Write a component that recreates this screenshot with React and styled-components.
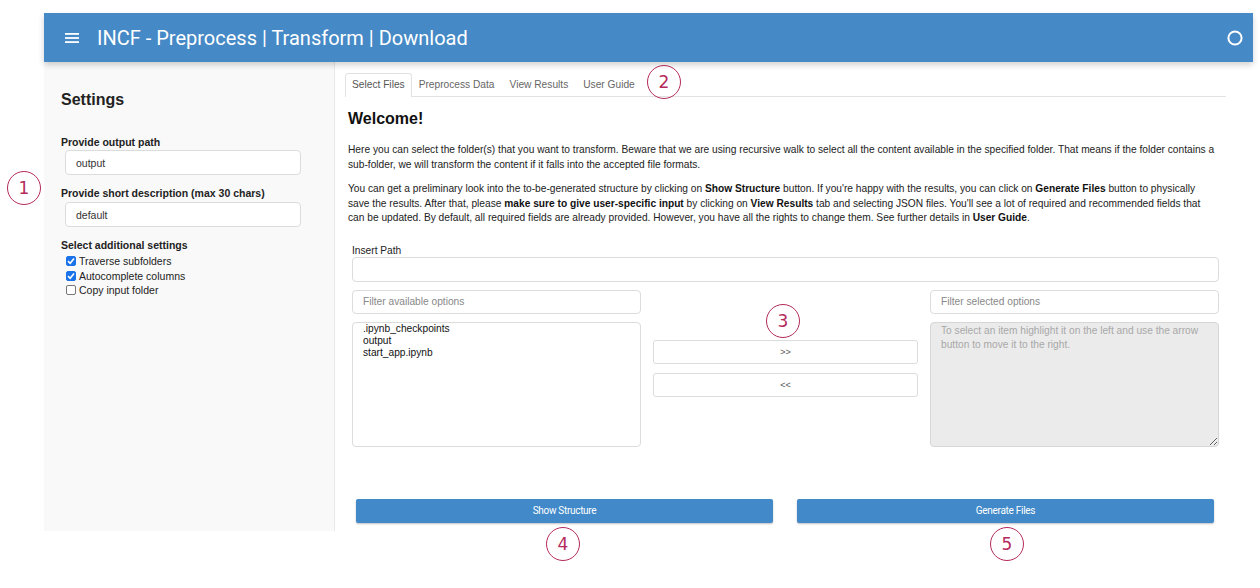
import styled, { createGlobalStyle } from "styled-components";

const Global = createGlobalStyle`
  html, body {
    margin: 0;
    padding: 0;
    background: #ffffff;
  }
  body {
    font-family: "Liberation Sans", Arial, sans-serif;
    color: #222;
  }
`;

const Page = styled.div`
  position: relative;
  width: 1260px;
  height: 588px;
  padding: 13px 7px 0 44px;
  box-sizing: border-box;
`;

const Frame = styled.div`
  display: flex;
  flex-direction: column;
  width: 1209px;
`;

const Header = styled.div`
  display: flex;
  align-items: center;
  height: 49px;
  background: #4589c6;
  color: #fff;
  padding: 0 9px 0 21px;
  box-shadow: 0 3px 6px rgba(0, 0, 0, 0.18);
  position: relative;
  z-index: 2;
`;

const Title = styled.div`
  font-family: Roboto, "Liberation Sans", sans-serif;
  font-size: 20px;
  margin-left: 18px;
  flex: 1;
`;

const Body = styled.div`
  display: grid;
  grid-template-columns: 291px 1fr;
  grid-template-rows: 469px;
  height: 469px;
  overflow: hidden;
`;

const Sidebar = styled.div`
  background: #f9f9f9;
  border-right: 1px solid #e8e8e8;
  padding: 28px 0 0 17px;
`;

const SideTitle = styled.h2`
  margin: 0 0 25px;
  font-size: 16px;
  line-height: 20px;
  font-weight: 700;
  color: #222;
`;

const FieldLabel = styled.div`
  font-size: 10.5px;
  font-weight: 700;
  line-height: 14px;
  color: #222;
  margin-bottom: ${(p) => p.$mb || 2}px;
`;

const SideInput = styled.div`
  width: 236px;
  height: 25px;
  box-sizing: border-box;
  margin: 0 0 11px 4px;
  border: 1px solid #dcdcdc;
  border-radius: 4px;
  background: #fff;
  display: flex;
  align-items: center;
  padding-left: 10px;
  font-size: 10.5px;
  color: #333;
`;

const CheckRow = styled.label`
  display: flex;
  align-items: center;
  gap: 3px;
  margin-left: 5px;
  height: 14.5px;
  font-size: 10.5px;
  color: #222;
`;

const Box = styled.span`
  width: 10px;
  height: 10px;
  border-radius: 2px;
  box-sizing: border-box;
  border: 1px solid ${(p) => (p.$on ? "#1a73e8" : "#777")};
  background: ${(p) => (p.$on ? "#1a73e8" : "#fff")};
  display: flex;
  align-items: center;
  justify-content: center;
`;

const Main = styled.div`
  padding: 11px 27px 0 10px;
  background: #fff;
`;

const Tabs = styled.div`
  display: flex;
  height: 23px;
  border-bottom: 1px solid #e2e2e2;
`;

const Tab = styled.div`
  font-size: 10.2px;
  color: ${(p) => (p.$active ? "#555" : "#666")};
  padding: 0 6px 2px;
  margin-right: ${(p) => (p.$active ? 0 : 1)}px;
  display: flex;
  align-items: center;
  box-sizing: border-box;
  height: 24px;
  background: ${(p) => (p.$active ? "#fff" : "transparent")};
  border: 1px solid ${(p) => (p.$active ? "#e2e2e2" : "transparent")};
  border-bottom: none;
  border-radius: 3px 3px 0 0;
`;

const Welcome = styled.h3`
  margin: 12px 0 0 3px;
  font-size: 16px;
  line-height: 20px;
  font-weight: 700;
  color: #111;
`;

const Para = styled.p`
  margin: ${(p) => p.$mt || 0}px 9px 0 3px;
  font-size: 10.2px;
  line-height: 14.5px;
  color: #222;
  b {
    color: #111;
  }
`;

const Widget = styled.div`
  margin: 18px 0 0 7px;
  width: 867px;
`;

const SmallLabel = styled.div`
  font-size: 10.2px;
  line-height: 13px;
  color: #222;
`;

const TextBox = styled.div`
  height: ${(p) => (p.$ph ? 24 : 25)}px;
  box-sizing: border-box;
  border: 1px solid #dcdcdc;
  border-radius: 4px;
  background: #fff;
  display: flex;
  align-items: center;
  padding-left: 10px;
  font-size: 10.2px;
  color: ${(p) => (p.$ph ? "#888" : "#333")};
`;

const Transfer = styled.div`
  display: grid;
  grid-template-columns: 289px 1fr 289px;
  column-gap: 12px;
  margin-top: 8px;
`;

const Column = styled.div`
  display: flex;
  flex-direction: column;
  gap: 8px;
`;

const ListBox = styled.div`
  height: 125px;
  box-sizing: border-box;
  border: 1px solid #dcdcdc;
  border-radius: 4px;
  background: #fff;
  padding: 0 10px;
  font-size: 10.2px;
  line-height: 12px;
  color: #111;
`;

const Pick = styled.textarea`
  height: 125px;
  box-sizing: border-box;
  border: 1px solid #d6d6d6;
  border-radius: 4px;
  background: #ebebeb;
  padding: 1px 10px;
  font-family: "Liberation Sans", Arial, sans-serif;
  font-size: 10.2px;
  line-height: 14.5px;
  resize: both;
  outline: none;
  &::placeholder {
    color: #a8a8a8;
  }
`;

const Arrows = styled.div`
  display: flex;
  flex-direction: column;
  gap: 9px;
  padding-top: 50px;
`;

const ArrowButton = styled.div`
  height: 24px;
  box-sizing: border-box;
  border: 1px solid #dcdcdc;
  border-radius: 3px;
  background: #fff;
  display: flex;
  align-items: center;
  justify-content: center;
  font-size: 9px;
  color: #555;
`;

const Actions = styled.div`
  display: grid;
  grid-template-columns: 1fr 1fr;
  column-gap: 24px;
  margin: 52px 12px 0 11px;
`;

const Action = styled.div`
  height: 24px;
  background: #4189c8;
  border-radius: 2px;
  box-shadow: 0 1px 2px rgba(0, 0, 0, 0.25);
  display: flex;
  align-items: center;
  justify-content: center;
  color: #fff;
  font-family: Roboto, "Liberation Sans", sans-serif;
  font-size: 10px;
  letter-spacing: -0.3px;
`;

const Mark = styled.div`
  position: absolute;
  left: ${(p) => p.$x - 17}px;
  top: ${(p) => p.$y - 17}px;
  width: 34px;
  height: 34px;
  box-sizing: border-box;
  border: 1.5px solid #b52a5c;
  border-radius: 50%;
  display: flex;
  align-items: center;
  justify-content: center;
  color: #b52a5c;
  font-family: "DejaVu Sans", sans-serif;
  font-size: 17px;
  z-index: 5;
`;

function Tick() {
  return (
    <svg width="8" height="8" viewBox="0 0 8 8">
      <path d="M1 4.2 L3.2 6.3 L7 1.6" stroke="#fff" strokeWidth="1.6" fill="none" />
    </svg>
  );
}

export default function App() {
  const checks = [
    { label: "Traverse subfolders", on: true },
    { label: "Autocomplete columns", on: true },
    { label: "Copy input folder", on: false },
  ];
  return (
    <>
      <Global />
      <Page>
        <Frame>
          <Header>
            <svg width="14" height="12" viewBox="0 0 14 12">
              <rect x="0" y="1" width="14" height="1.8" fill="#fff" />
              <rect x="0" y="5.1" width="14" height="1.8" fill="#fff" />
              <rect x="0" y="9.2" width="14" height="1.8" fill="#fff" />
            </svg>
            <Title>INCF - Preprocess | Transform | Download</Title>
            <svg width="18" height="18" viewBox="0 0 18 18">
              <circle cx="9" cy="9" r="6.6" stroke="#fff" strokeWidth="2" fill="none" />
            </svg>
          </Header>
          <Body>
            <Sidebar>
              <SideTitle>Settings</SideTitle>
              <FieldLabel $mb={1}>Provide output path</FieldLabel>
              <SideInput>output</SideInput>
              <FieldLabel $mb={2}>Provide short description (max 30 chars)</FieldLabel>
              <SideInput>default</SideInput>
              <FieldLabel $mb={2}>Select additional settings</FieldLabel>
              {checks.map((c) => (
                <CheckRow key={c.label}>
                  <Box $on={c.on}>{c.on && <Tick />}</Box>
                  {c.label}
                </CheckRow>
              ))}
            </Sidebar>
            <Main>
              <Tabs>
                <Tab $active>Select Files</Tab>
                <Tab>Preprocess Data</Tab>
                <Tab>View Results</Tab>
                <Tab>User Guide</Tab>
              </Tabs>
              <Welcome>Welcome!</Welcome>
              <Para $mt={14}>
                Here you can select the folder(s) that you want to transform. Beware that we are using recursive walk to select all the content available in the specified folder. That means if the folder contains a sub-folder, we will transform the content if it falls into the accepted file formats.
              </Para>
              <Para $mt={10}>
                You can get a preliminary look into the to-be-generated structure by clicking on <b>Show Structure</b> button. If you're happy with the results, you can click on <b>Generate Files</b> button to physically save the results. After that, please <b>make sure to give user-specific input</b> by clicking on <b>View Results</b> tab and selecting JSON files. You'll see a lot of required and recommended fields that can be updated. By default, all required fields are already provided. However, you have all the rights to change them. See further details in <b>User Guide</b>.
              </Para>
              <Widget>
                <SmallLabel>Insert Path</SmallLabel>
                <TextBox />
                <Transfer>
                  <Column>
                    <TextBox $ph>Filter available options</TextBox>
                    <ListBox>
                      <div>.ipynb_checkpoints</div>
                      <div>output</div>
                      <div>start_app.ipynb</div>
                    </ListBox>
                  </Column>
                  <Arrows>
                    <ArrowButton>&gt;&gt;</ArrowButton>
                    <ArrowButton>&lt;&lt;</ArrowButton>
                  </Arrows>
                  <Column>
                    <TextBox $ph>Filter selected options</TextBox>
                    <Pick readOnly placeholder="To select an item highlight it on the left and use the arrow button to move it to the right." />
                  </Column>
                </Transfer>
              </Widget>
              <Actions>
                <Action>Show Structure</Action>
                <Action>Generate Files</Action>
              </Actions>
            </Main>
          </Body>
        </Frame>
        <Mark $x={24} $y={188}>1</Mark>
        <Mark $x={664} $y={82}>2</Mark>
        <Mark $x={783} $y={321}>3</Mark>
        <Mark $x={563} $y={544}>4</Mark>
        <Mark $x={1007} $y={544}>5</Mark>
      </Page>
    </>
  );
}
